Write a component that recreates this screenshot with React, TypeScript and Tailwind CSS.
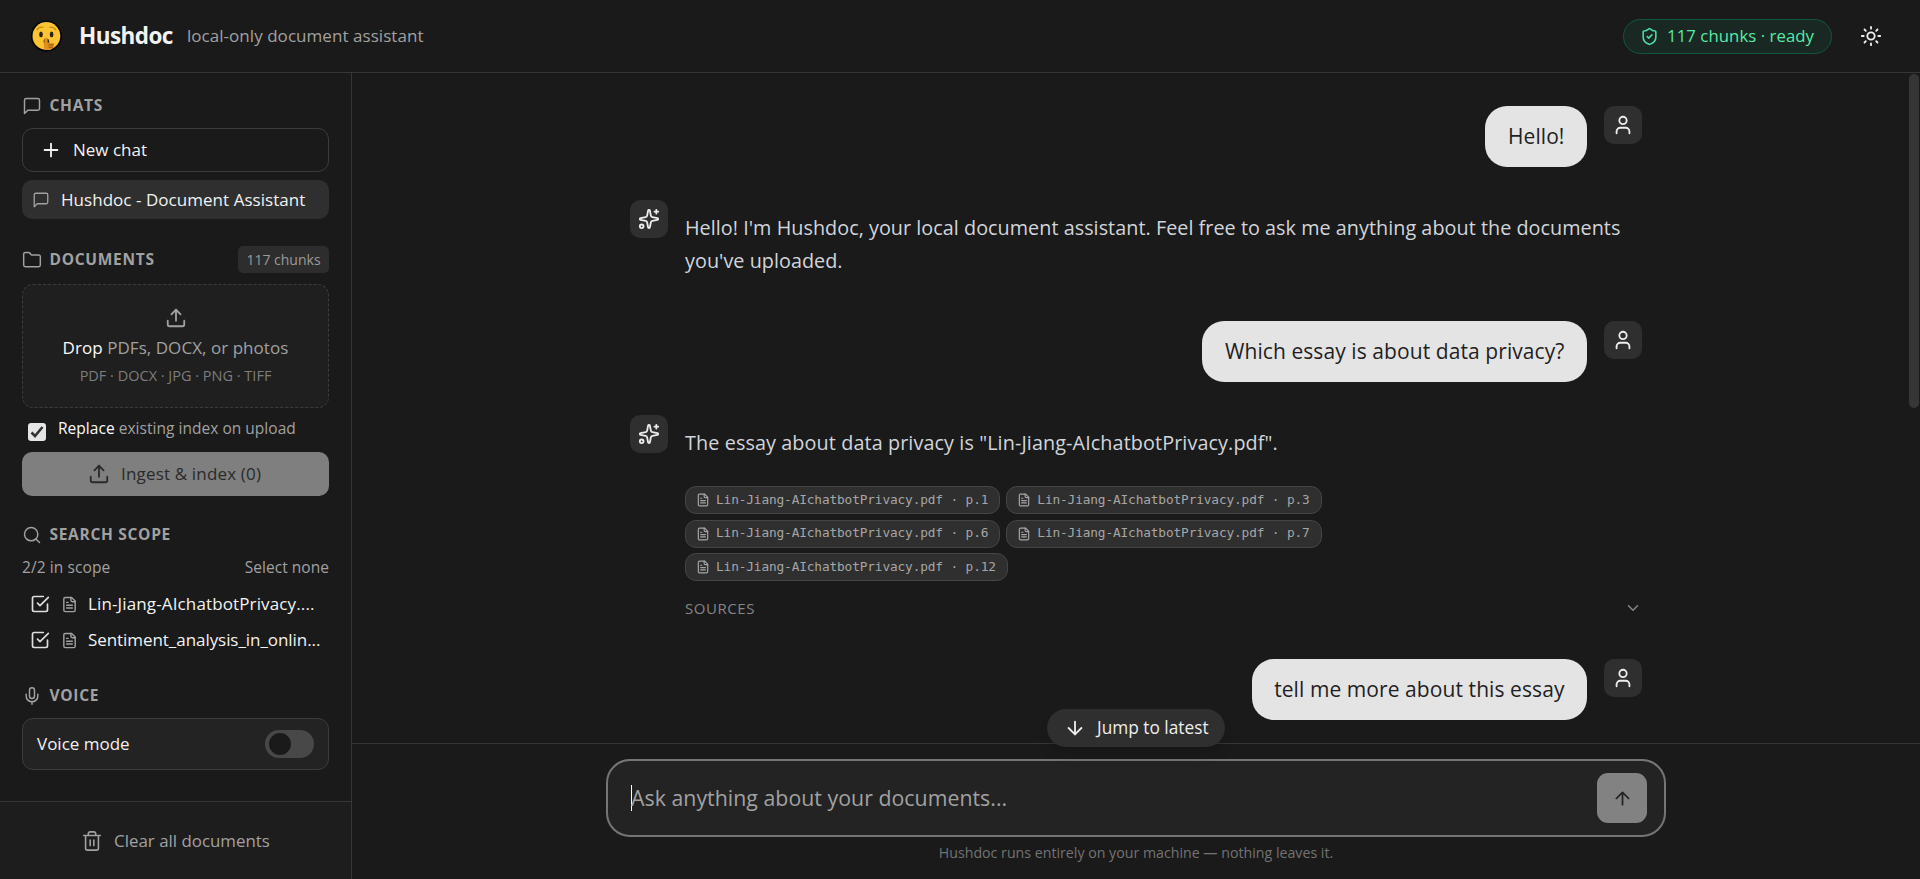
import type { ReactNode } from "react";

type IconProps = { className: string };

function Icon({ className, thin = false, children }: IconProps & { thin?: boolean; children: ReactNode }) {
  return (
    <svg
      viewBox="0 0 24 24"
      fill="none"
      stroke="currentColor"
      strokeWidth={thin ? 1.75 : 2}
      strokeLinecap="round"
      strokeLinejoin="round"
      className={`shrink-0 ${className}`}
    >
      {children}
    </svg>
  );
}

const MessageIcon = ({ className }: IconProps) => (
  <Icon thin className={className}>
    <path d="M21 15a2 2 0 0 1-2 2H7l-4 4V5a2 2 0 0 1 2-2h14a2 2 0 0 1 2 2z" />
  </Icon>
);
const UploadIcon = ({ className }: IconProps) => (
  <Icon className={className}>
    <path d="M21 15v4a2 2 0 0 1-2 2H5a2 2 0 0 1-2-2v-4" />
    <path d="m17 8-5-5-5 5" />
    <path d="M12 3v12" />
  </Icon>
);
const FileIcon = ({ className }: IconProps) => (
  <Icon className={className}>
    <path d="M15 2H6a2 2 0 0 0-2 2v16a2 2 0 0 0 2 2h12a2 2 0 0 0 2-2V7Z" />
    <path d="M14 2v4a2 2 0 0 0 2 2h4" />
    <path d="M10 9H8" />
    <path d="M16 13H8" />
    <path d="M16 17H8" />
  </Icon>
);
const CheckSquareIcon = ({ className }: IconProps) => (
  <Icon className={className}>
    <path d="m9 11 3 3L22 4" />
    <path d="M21 12v7a2 2 0 0 1-2 2H5a2 2 0 0 1-2-2V5a2 2 0 0 1 2-2h11" />
  </Icon>
);
const UserIcon = ({ className }: IconProps) => (
  <Icon className={className}>
    <path d="M19 21v-2a4 4 0 0 0-4-4H9a4 4 0 0 0-4 4v2" />
    <circle cx="12" cy="7" r="4" />
  </Icon>
);
const SparklesIcon = ({ className }: IconProps) => (
  <Icon className={className}>
    <path d="M11.017 2.814a1 1 0 0 1 1.966 0l1.051 5.558a2 2 0 0 0 1.594 1.594l5.558 1.051a1 1 0 0 1 0 1.966l-5.558 1.051a2 2 0 0 0-1.594 1.594l-1.051 5.558a1 1 0 0 1-1.966 0l-1.051-5.558a2 2 0 0 0-1.594-1.594l-5.558-1.051a1 1 0 0 1 0-1.966l5.558-1.051a2 2 0 0 0 1.594-1.594z" />
    <path d="M20 2v4" />
    <path d="M22 4h-4" />
    <circle cx="4" cy="20" r="2" />
  </Icon>
);

function ShushLogo() {
  return (
    <svg viewBox="0 0 32 32" className="size-8 shrink-0">
      <circle cx="16.4" cy="16.2" r="15.6" fill="#050505" />
      <circle cx="16.4" cy="16" r="13.9" fill="#fcc433" />
      <path d="M7 9.800c1.200-2 3.400-3 6-2.700" stroke="#c98a12" strokeWidth="1.300" fill="none" strokeLinecap="round" />
      <path d="M25.800 9.800c-1.200-2-3.400-3-6-2.700" stroke="#c98a12" strokeWidth="1.300" fill="none" strokeLinecap="round" />
      <ellipse cx="11" cy="14.4" rx="1.8" ry="2.8" fill="#2b2112" />
      <ellipse cx="21.6" cy="14.4" rx="1.8" ry="2.8" fill="#2b2112" />
      <ellipse cx="16.4" cy="21.400" rx="2.800" ry="3" fill="#43300f" />
      <path
        d="M14.6 19.2c0-2 3-2 3 0v3.600l5.400.200c1.800.2 1.800 2.200.4 2.600 1 .6.6 2-.6 2.200-.4 1.200-1.600 2-3.200 2.200h-4c-1.400-.8-2-2.400-1.800-4z"
        fill="#df8f1c"
      />
      <path d="M19 24.900h4.200M19 27.200h3.400" stroke="#8c4f12" strokeWidth="0.900" strokeLinecap="round" />
    </svg>
  );
}

function Header() {
  return (
    <header className="flex h-[73px] shrink-0 items-center border-b border-[#363636] pr-[38px] pl-[30px]">
      <ShushLogo />
      <h1 className="ml-[17px] text-[22.5px] font-bold tracking-[-0.55px] text-[#f2f2f2]">Hushdoc</h1>
      <span className="ml-[14px] text-[17px] tracking-[0.05px] text-[#a1a1a1]">local-only document assistant</span>
      <div className="ml-auto flex h-[35px] w-[209px] items-center rounded-full border border-[#115740] bg-[#192822] pl-[16px] text-[#57eaa9]">
        <Icon className="size-[19px] text-[#4ddba6]">
          <path d="M20 13c0 5-3.500 7.500-7.660 8.950a1 1 0 0 1-.670-.010C7.500 20.500 4 18 4 13V6a1 1 0 0 1 1-1c2 0 4.500-1.200 6.240-2.720a1.170 1.170 0 0 1 1.520 0C14.510 3.810 17 5 19 5a1 1 0 0 1 1 1z" />
          <path d="m9 12 2 2 4-4" />
        </Icon>
        <span className="ml-2 text-[16.8px] tracking-[0.04px] whitespace-nowrap">117 chunks · ready</span>
      </div>
      <button className="ml-[28px] text-[#f0f0f0]">
        <Icon className="size-[22px]">
          <circle cx="12" cy="12" r="4" />
          <path d="M12 2v2M12 20v2M4.930 4.930l1.410 1.410M17.660 17.660l1.410 1.410M2 12h2M20 12h2M6.340 17.660l-1.410 1.410M19.070 4.930l-1.410 1.410" />
        </Icon>
      </button>
    </header>
  );
}

function SectionTitle({ icon, children }: { icon: ReactNode; children: ReactNode }) {
  return (
    <div className="flex items-center gap-[7.5px] text-[#a1a1a1]">
      {icon}
      <h2 className="-mt-[2px] text-[15.5px] leading-[20px] font-bold tracking-[0.7px]">{children}</h2>
    </div>
  );
}

function ScopeRow({ name, tracking }: { name: string; tracking: string }) {
  return (
    <div className="flex h-9 items-center pl-2">
      <CheckSquareIcon className="size-5 text-[#dedede]" />
      <FileIcon className="ml-[11px] size-[17px] text-[#a1a1a1]" />
      <span className={`ml-[10px] text-[17px] whitespace-nowrap text-[#f2f2f2] ${tracking}`}>{name}</span>
    </div>
  );
}

function Sidebar() {
  return (
    <aside className="flex w-[352px] shrink-0 flex-col border-r border-[#363636]">
      <div className="flex flex-1 flex-col px-[22px] pt-[23px]">
        <SectionTitle icon={<MessageIcon className="size-5" />}>CHATS</SectionTitle>
        <button className="mt-3 flex h-11 items-center rounded-[11px] border border-[#3c3c3c] pl-[17px] text-[17px] text-[#f2f2f2]">
          <Icon className="size-[22px]">
            <path d="M5 12h14M12 5v14" />
          </Icon>
          <span className="ml-[11px]">New chat</span>
        </button>
        <div className="mt-2 flex h-[39px] items-center rounded-[10px] bg-[#2f2f2f] pl-[10px] text-[17px] text-[#f2f2f2]">
          <MessageIcon className="size-[18px] text-[#a1a1a1]" />
          <span className="ml-[11px] tracking-[0.04px]">Hushdoc - Document Assistant</span>
        </div>

        <div className="mt-[27px] flex h-[27px] items-center justify-between">
          <SectionTitle
            icon={
              <Icon thin className="size-5">
                <path d="M20 20a2 2 0 0 0 2-2V8a2 2 0 0 0-2-2h-7.900a2 2 0 0 1-1.690-.900L9.600 3.900A2 2 0 0 0 7.930 3H4a2 2 0 0 0-2 2v13a2 2 0 0 0 2 2Z" />
              </Icon>
            }
          >
            DOCUMENTS
          </SectionTitle>
          <span className="flex h-[27px] w-[91px] items-center justify-center rounded-[5px] bg-[#2d2d2d] text-[14px] text-[#9a9a9a]">
            117 chunks
          </span>
        </div>
        <div className="mt-[11px] flex h-[124px] flex-col items-center rounded-[11px] border border-dashed border-[#3c3c3c] bg-[#1f1f1f] pt-[22px]">
          <UploadIcon className="size-[22px] text-[#a1a1a1]" />
          <p className="mt-[6px] text-[17px] leading-[26px] tracking-[0.05px] text-[#a1a1a1]">
            <span className="text-[#fafafa]">Drop</span> PDFs, DOCX, or photos
          </p>
          <p className="mt-[4px] text-[14.5px] leading-[22px] text-[#7d7d7d]">PDF · DOCX · JPG · PNG · TIFF</p>
        </div>
        <label className="mt-[9px] flex h-[26px] items-center pl-[6px]">
          <span className="mt-1 flex size-[18px] items-center justify-center rounded-[3px] bg-[#e5e5e5]">
            <svg viewBox="0 0 14 14" className="size-[14px]" fill="none" stroke="#333333" strokeWidth="2.600">
              <path d="M1.500 7.500 5 11 12.500 2" />
            </svg>
          </span>
          <span className="-mt-[2px] ml-[12px] text-[15.5px] tracking-[0.03px] text-[#a1a1a1]">
            <span className="text-[#fafafa]">Replace</span> existing index on upload
          </span>
        </label>
        <button className="mt-[9px] flex h-11 items-center rounded-[10px] bg-[#7f7f7f] pl-[66px] text-[17px] tracking-[0.17px] text-[#2a2a2a]">
          <UploadIcon className="size-[22px]" />
          <span className="ml-[11px]">Ingest &amp; index (0)</span>
        </button>

        <div className="mt-[29px]">
          <SectionTitle
            icon={
              <Icon thin className="size-5">
                <circle cx="11" cy="11" r="8" />
                <path d="m21 21-4.300-4.300" />
              </Icon>
            }
          >
            SEARCH SCOPE
          </SectionTitle>
        </div>
        <div className="mt-3 flex h-[22px] items-center justify-between text-[15.5px] text-[#a1a1a1]">
          <span className="tracking-[0.1px]">2/2 in scope</span>
          <span className="tracking-[0.04px]">Select none</span>
        </div>
        <div className="mt-[7px]">
          <ScopeRow name="Lin-Jiang-AIchatbotPrivacy...." tracking="tracking-[0.13px]" />
          <ScopeRow name="Sentiment_analysis_in_onlin..." tracking="tracking-[-0.06px]" />
        </div>

        <div className="mt-[28px]">
          <SectionTitle
            icon={
              <Icon thin className="size-5">
                <path d="M12 19v3" />
                <path d="M19 10v2a7 7 0 0 1-14 0v-2" />
                <rect x="9" y="2" width="6" height="13" rx="3" />
              </Icon>
            }
          >
            VOICE
          </SectionTitle>
        </div>
        <div className="mt-3 flex h-[52px] items-center justify-between rounded-[11px] border border-[#3c3c3c] bg-[#232323] px-[14px] text-[17px] text-[#f2f2f2]">
          <span>Voice mode</span>
          <span className="flex h-7 w-[49px] items-center rounded-full bg-[#484848] pl-1">
            <span className="size-[22px] rounded-full bg-[#1a1a1a]" />
          </span>
        </div>
      </div>
      <div className="flex h-[78px] shrink-0 items-center justify-center border-t border-[#363636] bg-[#1d1d1d] text-[#a1a1a1]">
        <Icon thin className="size-[22px]">
          <path d="M3 6h18M19 6v14a2 2 0 0 1-2 2H7a2 2 0 0 1-2-2V6M8 6V4a2 2 0 0 1 2-2h4a2 2 0 0 1 2 2v2M10 11v6M14 11v6" />
        </Icon>
        <span className="ml-[11px] text-[16.9px]">Clear all documents</span>
      </div>
    </aside>
  );
}

function UserMessage({ children }: { children: ReactNode }) {
  return (
    <div className="flex justify-end gap-[17px]">
      <div className="flex h-[61px] items-center rounded-[22px] bg-[#e4e4e4] px-[22.5px] text-[21px] tracking-[0.08px] text-[#1f1f1f]">
        {children}
      </div>
      <div className="flex size-[38px] items-center justify-center rounded-[10px] bg-[#2f2f2f] text-[#ededed]">
        <UserIcon className="size-[22px]" />
      </div>
    </div>
  );
}

function AssistantMessage({ children }: { children: ReactNode }) {
  return (
    <div className="flex gap-[17px]">
      <div className="flex size-[38px] shrink-0 items-center justify-center rounded-[10px] bg-[#2f2f2f] text-[#ededed]">
        <SparklesIcon className="size-[22px]" />
      </div>
      <div className="min-w-0 flex-1 pt-[11px] text-[19.8px] leading-[33px] text-[#d1d5db]">{children}</div>
    </div>
  );
}

function Citation({ page }: { page: number }) {
  return (
    <span className="flex h-7 items-center rounded-[11px] border border-[#454545] bg-[#2f2f2f] pr-[11px] pl-[10px] font-['DejaVu_Sans_Mono',monospace] text-[12.8px] leading-none tracking-[-0.14px] whitespace-nowrap text-[#a6a6a6]">
      <FileIcon className="mr-[6px] size-[14px]" />
      Lin-Jiang-AIchatbotPrivacy.pdf · p.{page}
    </span>
  );
}

function Conversation() {
  return (
    <div className="flex min-h-0 flex-1">
      <div className="h-full min-w-0 flex-1 overflow-hidden pt-[33px] pl-[278px]">
        <div className="w-[1012px]">
          <UserMessage>Hello!</UserMessage>
          <div className="mt-[33px] h-[121px]">
            <AssistantMessage>
              <p className="tracking-[0.035px] whitespace-nowrap">
                Hello! I'm Hushdoc, your local document assistant. Feel free to ask me anything about the documents
                <br />
                you've uploaded.
              </p>
            </AssistantMessage>
          </div>
          <UserMessage>Which essay is about data privacy?</UserMessage>
          <div className="mt-[33px] h-[244px]">
            <AssistantMessage>
              <p className="tracking-[0.1px]">The essay about data privacy is "Lin-Jiang-AIchatbotPrivacy.pdf".</p>
              <div className="mt-[27px] flex w-[700px] flex-wrap gap-x-[6px] gap-y-[5.5px]">
                <Citation page={1} />
                <Citation page={3} />
                <Citation page={6} />
                <Citation page={7} />
                <Citation page={12} />
              </div>
              <div className="mt-[16px] flex h-[22px] items-center justify-between text-[15px] tracking-[0.55px] text-[#858585]">
                <span>SOURCES</span>
                <Icon className="size-[18px]">
                  <path d="m6 9 6 6 6-6" />
                </Icon>
              </div>
            </AssistantMessage>
          </div>
          <UserMessage>tell me more about this essay</UserMessage>
        </div>
      </div>
      <div className="w-[11px] shrink-0 pt-px pr-px">
        <div className="h-[334px] rounded-full bg-[#363636]" />
      </div>
    </div>
  );
}

function Composer() {
  return (
    <div className="relative h-[136px] shrink-0 border-t border-[#363636] pt-[15px]">
      <button className="absolute -top-[35px] left-[695px] flex h-[38px] w-[178px] items-center rounded-full bg-[#2f2f2f] pl-[17px] text-[17.3px] whitespace-nowrap text-[#ededed] shadow-lg">
        <Icon className="size-[22px]">
          <path d="M12 5v14M19 12l-7 7-7-7" />
        </Icon>
        <span className="ml-[11px]">Jump to latest</span>
      </button>
      <div className="ml-[254px] flex h-[78px] w-[1060px] items-center justify-between rounded-[24px] border-2 border-[#757575] bg-[#232323] pr-[17px] pl-[23px]">
        <div className="flex items-center">
          <span className="-mr-px h-[26px] w-px bg-white" />
          <span className="text-[21.3px] tracking-[0.03px] text-[#a1a1a1]">Ask anything about your documents...</span>
        </div>
        <button className="flex size-[50px] items-center justify-center rounded-[11px] bg-[#828282] text-[#232323]">
          <Icon className="size-[21px]">
            <path d="m5 12 7-7 7 7M12 19V5" />
          </Icon>
        </button>
      </div>
      <p className="mt-[5px] text-center text-[14.2px] leading-[22px] text-[#737373]">
        Hushdoc runs entirely on your machine — nothing leaves it.
      </p>
    </div>
  );
}

export default function App() {
  return (
    <div className="flex h-[879px] w-full flex-col overflow-hidden bg-[#1a1a1a] font-['Open_Sans','Noto_Sans',sans-serif]">
      <Header />
      <div className="flex min-h-0 flex-1">
        <Sidebar />
        <main className="flex min-w-0 flex-1 flex-col">
          <Conversation />
          <Composer />
        </main>
      </div>
    </div>
  );
}
